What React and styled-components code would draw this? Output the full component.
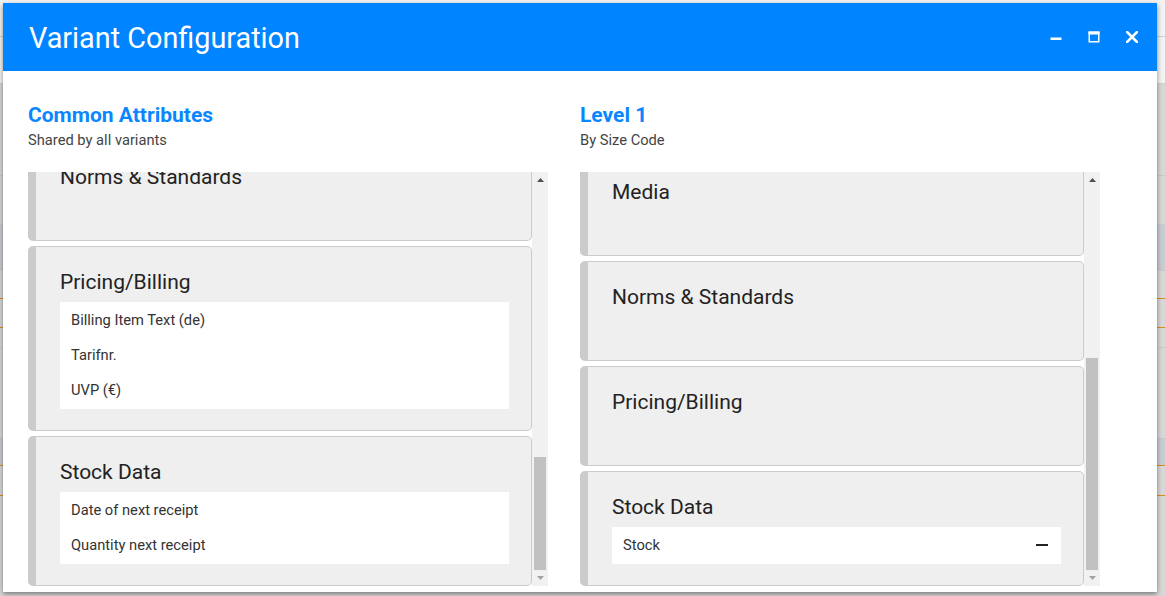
import React, { useLayoutEffect, useRef, useState } from 'react';
import styled, { createGlobalStyle } from 'styled-components';

const commonGroups = [
  { id: 'general', title: 'General Information', items: ['Article Number', 'Manufacturer', 'Brand', 'Product Line'] },
  { id: 'desc', title: 'Descriptions', items: ['Short Text (de)', 'Long Text (de)', 'Marketing Text (de)'] },
  { id: 'log', title: 'Logistics', items: ['Weight (kg)', 'Length (mm)', 'Width (mm)', 'Height (mm)', 'Packaging Unit'] },
  { id: 'media', title: 'Media', items: ['Main Image', 'Data Sheet'] },
  { id: 'class', title: 'Classification', items: ['ETIM Class'] },
  { id: 'norms', title: 'Norms & Standards', items: [] },
  { id: 'pricing', title: 'Pricing/Billing', items: ['Billing Item Text (de)', 'Tarifnr.', 'UVP (€)'] },
  { id: 'stock', title: 'Stock Data', items: ['Date of next receipt', 'Quantity next receipt'] },
];

const levelGroups = [
  { id: 'general', title: 'General Information', items: [] },
  { id: 'desc', title: 'Descriptions', items: [] },
  { id: 'log', title: 'Logistics', items: [] },
  { id: 'media', title: 'Media', items: [] },
  { id: 'norms', title: 'Norms & Standards', items: [] },
  { id: 'pricing', title: 'Pricing/Billing', items: [] },
  { id: 'stock', title: 'Stock Data', items: ['Stock'], removable: true },
];

const backdropRows = [
  { h: 36, bg: '#f3f3f3', line: '#d0d0d0' },
  { h: 46, bg: '#f3f3f3', line: '#d0d0d0' },
  { h: 91, bg: '#d8d8d9', line: '#c9c9c9' },
  { h: 48, bg: '#d8d8d9', line: '#c9c9c9' },
  { h: 45, bg: '#c9ccd1', line: '#c9c9c9' },
  { h: 27, bg: '#d8d8d9', line: '#e08a1e' },
  { h: 28, bg: '#d8d8d9', line: '#e08a1e' },
  { h: 19, bg: '#d8d8d9', line: '#c9c9c9' },
  { h: 90, bg: '#d8d8d9', line: '#c9c9c9' },
  { h: 26, bg: '#c9ccd1', line: '#e08a1e' },
  { h: 29, bg: '#d8d8d9', line: '#e08a1e' },
  { h: 110, bg: '#d8d8d9', line: '#c9c9c9' },
];

const GlobalStyle = createGlobalStyle`
  html, body {
    margin: 0;
    padding: 0;
    height: 100%;
    overflow: hidden;
    background: #d8d8d9;
    font-family: Roboto, "Liberation Sans", sans-serif;
  }
`;

const Page = styled.div`
  position: relative;
  width: 1165px;
  height: 596px;
  overflow: hidden;
`;

const Backdrop = styled.div`
  display: flex;
  flex-direction: column;
`;

const BackdropRow = styled.div`
  height: ${(p) => p.$h}px;
  background: ${(p) => p.$bg};
  border-bottom: 1px solid ${(p) => p.$line};
`;

const Dialog = styled.div`
  position: absolute;
  left: 3px;
  top: 3px;
  width: 1154px;
  height: 589px;
  background: #ffffff;
  box-shadow: 0 2px 5px rgba(0, 0, 0, 0.45);
  display: flex;
  flex-direction: column;
`;

const Header = styled.div`
  height: 68px;
  flex-shrink: 0;
  background: #0084ff;
  display: flex;
  align-items: center;
  padding: 0 19px 0 26px;
`;

const Title = styled.h1`
  flex: 1;
  margin: 0;
  padding-top: 2px;
  color: #ffffff;
  font-size: 28.8px;
  font-weight: 400;
  line-height: 34px;
`;

const WindowButtons = styled.div`
  display: flex;
  align-items: center;
  gap: 26px;
`;

const WindowButton = styled.button`
  width: 12px;
  height: 12px;
  padding: 0;
  border: none;
  background: none;
  color: #ffffff;
  display: flex;
  align-items: center;
  justify-content: center;
  cursor: pointer;
`;

const Body = styled.div`
  display: grid;
  grid-template-columns: 520px 520px;
  column-gap: 32px;
  padding: 32px 25px 0;
`;

const Column = styled.section`
  display: flex;
  flex-direction: column;
`;

const ColumnTitle = styled.h2`
  margin: 0;
  font-size: 21px;
  line-height: 24px;
  font-weight: 700;
  color: #0a86ff;
`;

const ColumnSub = styled.div`
  margin-top: 4px;
  font-size: 14.7px;
  line-height: 18px;
  color: #444;
`;

const PanelFrame = styled.div`
  margin-top: 23px;
  height: 414px;
  display: flex;
`;

const Viewport = styled.div`
  width: 504px;
  height: 100%;
  overflow: hidden;
  display: flex;
  flex-direction: column;
  gap: 5px;
`;

const ScrollTrack = styled.div`
  width: 16px;
  height: 100%;
  background: #f1f1f1;
  display: flex;
  flex-direction: column;
`;

const ScrollArrow = styled.div`
  height: 16px;
  flex-shrink: 0;
  display: flex;
  align-items: center;
  justify-content: center;
`;

const ScrollRail = styled.div`
  flex: 1;
  display: flex;
  flex-direction: column;
`;

const ScrollThumb = styled.div`
  margin: 0 2px;
  background: #c1c1c1;
`;

const Card = styled.div`
  flex-shrink: 0;
  background: #efefef;
  border: 1px solid #cbcbcb;
  border-left: 8px solid #cbcbcb;
  border-radius: 5px;
  padding: 23px 22px 21px 24px;
`;

const CardTitle = styled.h3`
  margin: 0 0 8px;
  font-size: 21px;
  line-height: 24px;
  font-weight: 400;
  color: #222;
`;

const AttrList = styled.div`
  min-height: 22px;
  background: ${(p) => (p.$empty ? 'transparent' : '#ffffff')};
  padding-bottom: ${(p) => (p.$empty ? 0 : 2)}px;
`;

const AttrItem = styled.div`
  height: 35px;
  display: flex;
  align-items: center;
  justify-content: space-between;
  padding: 0 13px 0 11px;
  font-size: 14.7px;
  color: #333;
`;

const RemoveIcon = () => (
  <svg width="12" height="12" viewBox="0 0 12 12">
    <rect x="0" y="5" width="12" height="2" fill="#222" />
  </svg>
);

const Arrow = ({ up, color }) => (
  <svg width="7" height="4" viewBox="0 0 7 4">
    <polygon points={up ? '0,4 7,4 3.5,0' : '0,0 7,0 3.5,4'} fill={color} />
  </svg>
);

const GroupCard = ({ group }) => (
  <Card>
    <CardTitle>{group.title}</CardTitle>
    <AttrList $empty={group.items.length === 0}>
      {group.items.map((item) => (
        <AttrItem key={item}>
          {item}
          {group.removable && <RemoveIcon />}
        </AttrItem>
      ))}
    </AttrList>
  </Card>
);

const GroupPanel = ({ groups }) => {
  const ref = useRef(null);
  const [thumb, setThumb] = useState({ top: 0, height: 40 });

  useLayoutEffect(() => {
    const el = ref.current;
    if (!el) return;
    el.scrollTop = el.scrollHeight;
    const rail = el.clientHeight - 32;
    const height = Math.max(20, Math.round((rail * el.clientHeight) / el.scrollHeight));
    const max = el.scrollHeight - el.clientHeight;
    const top = max > 0 ? Math.round(((rail - height) * el.scrollTop) / max) : 0;
    setThumb({ top, height });
  }, []);

  return (
    <PanelFrame>
      <Viewport ref={ref}>
        {groups.map((g) => (
          <GroupCard key={g.id} group={g} />
        ))}
      </Viewport>
      <ScrollTrack>
        <ScrollArrow>
          <Arrow up color="#505050" />
        </ScrollArrow>
        <ScrollRail>
          <ScrollThumb style={{ marginTop: thumb.top, height: thumb.height }} />
        </ScrollRail>
        <ScrollArrow>
          <Arrow color="#a3a3a3" />
        </ScrollArrow>
      </ScrollTrack>
    </PanelFrame>
  );
};

const App = () => {
  return (
    <Page>
      <GlobalStyle />
      <Backdrop>
        {backdropRows.map((r, i) => (
          <BackdropRow key={i} $h={r.h} $bg={r.bg} $line={r.line} />
        ))}
      </Backdrop>
      <Dialog>
        <Header>
          <Title>Variant Configuration</Title>
          <WindowButtons>
            <WindowButton aria-label="Minimize">
              <svg width="12" height="12" viewBox="0 0 12 12">
                <rect x="0.5" y="6.5" width="11" height="2.5" fill="#fff" />
              </svg>
            </WindowButton>
            <WindowButton aria-label="Maximize">
              <svg width="12" height="12" viewBox="0 0 12 12">
                <rect x="0.5" y="0.5" width="11" height="3" fill="#fff" />
                <rect x="1.25" y="1.25" width="9.5" height="9.5" fill="none" stroke="#fff" strokeWidth="1.5" />
              </svg>
            </WindowButton>
            <WindowButton aria-label="Close">
              <svg width="12" height="12" viewBox="0 0 12 12">
                <path d="M1 1 L11 11 M11 1 L1 11" stroke="#fff" strokeWidth="2.6" strokeLinecap="square" />
              </svg>
            </WindowButton>
          </WindowButtons>
        </Header>
        <Body>
          <Column>
            <ColumnTitle>Common Attributes</ColumnTitle>
            <ColumnSub>Shared by all variants</ColumnSub>
            <GroupPanel groups={commonGroups} />
          </Column>
          <Column>
            <ColumnTitle>Level 1</ColumnTitle>
            <ColumnSub>By Size Code</ColumnSub>
            <GroupPanel groups={levelGroups} />
          </Column>
        </Body>
      </Dialog>
    </Page>
  );
};

export default App;
